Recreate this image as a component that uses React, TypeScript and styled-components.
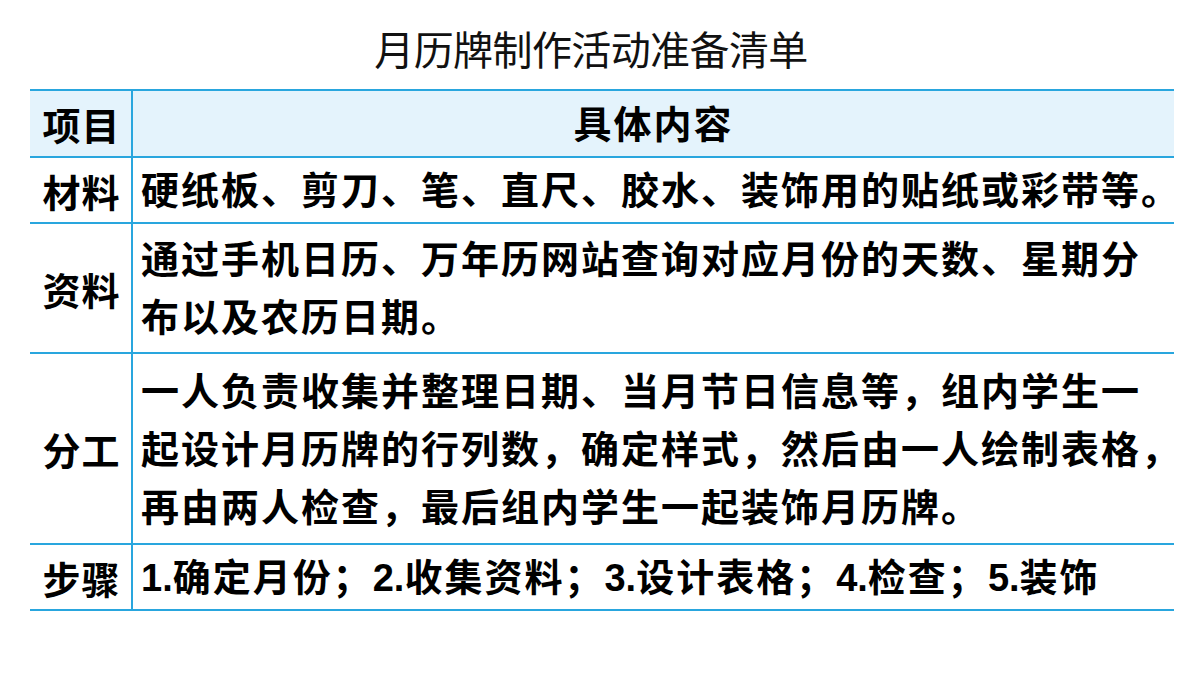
import styled, { createGlobalStyle } from "styled-components"

const GlobalStyle = createGlobalStyle`
	html, body {
		margin: 0;
		padding: 0;
		background: #ffffff;
	}
	body {
		font-family: "Liberation Sans", "Noto Sans CJK SC", sans-serif;
		color: #000000;
	}
`

const Page = styled.div`
	width: 1200px;
	height: 675px;
	box-sizing: border-box;
	padding: 0 26px 0 30px;
	display: flex;
	flex-direction: column;
	overflow: hidden;
`

const Title = styled.div`
	height: 89px;
	box-sizing: border-box;
	padding-top: 6px;
	padding-right: 22px;
	display: flex;
	align-items: center;
	justify-content: center;
	font-family: "Noto Sans CJK SC", sans-serif;
	font-weight: 400;
	font-size: 40px;
	letter-spacing: -0.6px;
	color: #111111;
`

const Table = styled.div`
	display: flex;
	flex-direction: column;
	border-top: 2px solid #29a6de;
`

const Row = styled.div<{ $height: number; $head?: boolean }>`
	display: grid;
	grid-template-columns: 103px 1fr;
	height: ${(p) => p.$height}px;
	box-sizing: border-box;
	border-bottom: 2px solid #29a6de;
	background: ${(p) => (p.$head ? "#e4f3fc" : "transparent")};
`

const Label = styled.div`
	display: flex;
	align-items: center;
	justify-content: center;
	border-right: 2px solid #29a6de;
	font-family: "Liberation Sans", "Noto Sans CJK SC", sans-serif;
	font-weight: 700;
	font-size: 38px;
	letter-spacing: 1px;
	padding-left: 2px;
`

const Content = styled.div<{ $center?: boolean }>`
	display: flex;
	flex-direction: column;
	justify-content: center;
	align-items: ${(p) => (p.$center ? "center" : "flex-start")};
	padding-left: ${(p) => (p.$center ? 0 : 8)}px;
	padding-top: 2px;
	font-family: "Liberation Sans", "Noto Sans CJK SC", sans-serif;
	font-weight: 700;
	font-size: 38px;
	letter-spacing: 2px;
	line-height: 58px;
	white-space: nowrap;
	overflow: visible;
`

const Line = styled.span`
	display: block;
`

const Num = styled.span`
	letter-spacing: 0;
`

const rows: { label: string; height: number; lines: string[] }[] = [
	{ label: "材料", height: 66, lines: ["硬纸板、剪刀、笔、直尺、胶水、装饰用的贴纸或彩带等。"] },
	{
		label: "资料",
		height: 130,
		lines: ["通过手机日历、万年历网站查询对应月份的天数、星期分", "布以及农历日期。"],
	},
	{
		label: "分工",
		height: 191,
		lines: [
			"一人负责收集并整理日期、当月节日信息等，组内学生一",
			"起设计月历牌的行列数，确定样式，然后由一人绘制表格，",
			"再由两人检查，最后组内学生一起装饰月历牌。",
		],
	},
	{ label: "步骤", height: 66, lines: ["1.确定月份；2.收集资料；3.设计表格；4.检查；5.装饰"] },
]

// keep digits and dots tight like the original, CJK keeps its spacing
const renderLine = (text: string) =>
	text.split(/(\d+\.)/).map((part, i) => (/^\d+\.$/.test(part) ? <Num key={i}>{part}</Num> : part))

export default function App() {
	return (
		<>
			<GlobalStyle />
			<Page>
				<Title>月历牌制作活动准备清单</Title>
				<Table>
					<Row $head $height={67}>
						<Label>项目</Label>
						<Content $center>具体内容</Content>
					</Row>
					{rows.map((r) => (
						<Row key={r.label} $height={r.height}>
							<Label>{r.label}</Label>
							<Content>
								{r.lines.map((l) => (
									<Line key={l}>{renderLine(l)}</Line>
								))}
							</Content>
						</Row>
					))}
				</Table>
			</Page>
		</>
	)
}
